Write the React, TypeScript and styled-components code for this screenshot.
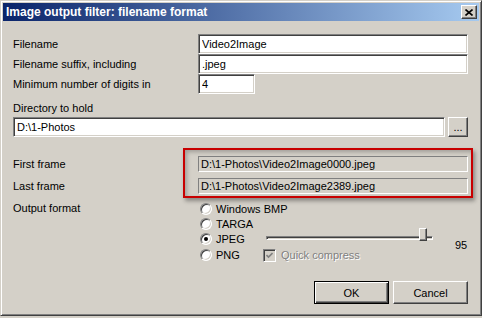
import styled, { createGlobalStyle } from "styled-components";

// classic win2k style dialog for the image output filter

const GlobalStyle = createGlobalStyle`
    html, body {
        margin: 0;
        padding: 0;
        background: #d4d0c8;
    }
    body {
        font-family: "Liberation Sans", Arial, sans-serif;
        font-size: 11px;
        color: #000;
    }
`;

const Window = styled.div`
    width: 482px;
    height: 316px;
    box-sizing: border-box;
    background: #d4d0c8;
    border-style: solid;
    border-width: 1px;
    border-color: #d4d0c8 #404040 #404040 #d4d0c8;
    box-shadow: inset 1px 1px 0 #fff, inset -1px -1px 0 #808080;
    padding: 2px 2px 0;
    display: flex;
    flex-direction: column;
`;

const TitleBar = styled.div`
    height: 18px;
    background: linear-gradient(to right, #0a246a, #a6caf0);
    display: flex;
    align-items: center;
    justify-content: space-between;
    padding: 0 2px 0 3px;
`;

const TitleText = styled.span`
    color: #fff;
    font-weight: 700;
    font-size: 12px;
`;

const CloseButton = styled.div`
    width: 16px;
    height: 14px;
    box-sizing: border-box;
    background: #d4d0c8;
    border-style: solid;
    border-width: 1px;
    border-color: #fff #404040 #404040 #fff;
    box-shadow: inset -1px -1px 0 #808080;
    display: flex;
    align-items: center;
    justify-content: center;
`;

const Content = styled.div`
    flex: 1;
    display: flex;
    flex-direction: column;
    padding: 13px 11px 0 10px;
`;

const FormGrid = styled.div`
    display: grid;
    grid-template-columns: 185px 1fr;
    align-items: center;
`;

const Label = styled.span`
    line-height: 13px;
    white-space: nowrap;
`;

const TextField = styled.input<{ $width?: number }>`
    box-sizing: border-box;
    height: 20px;
    width: ${({ $width }) => ($width ? `${$width}px` : "100%")};
    margin: 0;
    padding: 0 3px;
    font: inherit;
    color: #000;
    background: #fff;
    border-style: solid;
    border-width: 1px;
    border-color: #808080 #fff #fff #808080;
    box-shadow: inset 1px 1px 0 #404040, inset -1px -1px 0 #d4d0c8;
    outline: none;
`;

const DirLabel = styled.div`
    line-height: 13px;
    margin: 8px 0 2px;
`;

const DirRow = styled.div`
    display: flex;
    gap: 3px;
    align-items: flex-start;
`;

const RaisedButton = styled.button<{ $default?: boolean; $w: number; $h: number }>`
    box-sizing: border-box;
    width: ${({ $w }) => $w}px;
    height: ${({ $h }) => $h}px;
    margin: 0;
    padding: 0;
    font: inherit;
    color: #000;
    background: #d4d0c8;
    border-style: solid;
    border-width: 1px;
    border-color: ${({ $default }) => ($default ? "#000" : "#fff #404040 #404040 #fff")};
    box-shadow: ${({ $default }) =>
        $default
            ? "inset 1px 1px 0 #fff, inset -1px -1px 0 #404040, inset -2px -2px 0 #808080"
            : "inset -1px -1px 0 #808080"};
`;

const FramesGrid = styled.div`
    display: grid;
    grid-template-columns: 185px 1fr;
    grid-template-rows: 16px 16px;
    row-gap: 6px;
    align-items: center;
    margin-top: 19px;
`;

const HighlightArea = styled.div`
    grid-column: 2;
    grid-row: 1 / span 2;
    position: relative;
    display: flex;
    flex-direction: column;
    gap: 6px;

    /* red annotation frame drawn over the two read only fields */
    &::after {
        content: "";
        position: absolute;
        top: -8px;
        bottom: -4px;
        left: -15px;
        right: -5px;
        border: 2px solid #c80000;
        box-shadow: 2px 3px 4px rgba(0, 0, 0, 0.35), inset 2px 2px 4px rgba(0, 0, 0, 0.25);
        pointer-events: none;
    }
`;

const StaticField = styled.div`
    box-sizing: border-box;
    height: 16px;
    line-height: 14px;
    padding-left: 2px;
    border-style: solid;
    border-width: 1px;
    border-color: #808080 #fff #fff #808080;
    white-space: nowrap;
`;

const OutputGrid = styled.div`
    display: grid;
    grid-template-columns: 187px 1fr;
    margin-top: 7px;
`;

const OutputLabel = styled.span`
    line-height: 15px;
`;

const FormatGrid = styled.div`
    display: grid;
    grid-template-columns: 63px 177px 1fr;
    grid-template-rows: 15px 15px 16px 16px;
`;

const RadioRow = styled.div<{ $row: number }>`
    grid-column: 1;
    grid-row: ${({ $row }) => $row};
    display: flex;
    align-items: center;
    gap: 4px;
    white-space: nowrap;
`;

const RadioCircle = styled.span<{ $checked?: boolean }>`
    position: relative;
    flex: none;
    box-sizing: border-box;
    width: 12px;
    height: 12px;
    border-radius: 50%;
    background: #fff;
    border-style: solid;
    border-width: 1px;
    border-color: #808080 #fff #fff #808080;
    box-shadow: inset 1px 1px 0 #404040, inset -1px -1px 0 #d4d0c8;

    &::after {
        content: "";
        display: ${({ $checked }) => ($checked ? "block" : "none")};
        position: absolute;
        left: 3px;
        top: 3px;
        width: 4px;
        height: 4px;
        border-radius: 50%;
        background: #000;
    }
`;

const SliderCell = styled.div`
    grid-column: 2;
    grid-row: 3;
    position: relative;
    display: flex;
    align-items: center;
    padding: 0 7px 0 3px;
    margin-top: -3px;
`;

const SliderTrack = styled.div`
    flex: 1;
    height: 4px;
    box-sizing: border-box;
    border-style: solid;
    border-width: 1px;
    border-color: #808080 #fff #fff #808080;
    box-shadow: inset 1px 1px 0 #404040;
`;

const SliderThumb = styled.div`
    position: absolute;
    left: 156px;
    top: 0;
    width: 8px;
    height: 13px;
    box-sizing: border-box;
    background: #d4d0c8;
    border-style: solid;
    border-width: 1px;
    border-color: #fff #404040 #404040 #fff;
    box-shadow: inset -1px -1px 0 #808080;
`;

const SliderValue = styled.span`
    grid-column: 3;
    grid-row: 3 / span 2;
    padding: 8px 0 0 15px;
    line-height: 13px;
`;

const CheckRow = styled.div`
    grid-column: 2;
    grid-row: 4;
    display: flex;
    align-items: center;
    gap: 5px;
`;

const CheckBox = styled.span`
    box-sizing: border-box;
    width: 13px;
    height: 13px;
    background: #d4d0c8;
    border-style: solid;
    border-width: 1px;
    border-color: #808080 #fff #fff #808080;
    box-shadow: inset 1px 1px 0 #404040, inset -1px -1px 0 #d4d0c8;
    display: flex;
    align-items: center;
    justify-content: center;
`;

const DisabledText = styled.span`
    color: #808080;
    text-shadow: 1px 1px 0 #fff;
`;

const ButtonRow = styled.div`
    display: flex;
    justify-content: flex-end;
    gap: 4px;
    margin-top: 18px;
`;

const formats = ["Windows BMP", "TARGA", "JPEG", "PNG"];

export default function App() {
    return (
        <>
            <GlobalStyle />
            <Window>
                <TitleBar>
                    <TitleText>Image output filter: filename format</TitleText>
                    <CloseButton>
                        <svg width="8" height="7" viewBox="0 0 8 7">
                            <path d="M0.5 0.5 L7.5 6.5 M7.5 0.5 L0.5 6.5" stroke="#000" strokeWidth="1.6" />
                        </svg>
                    </CloseButton>
                </TitleBar>

                <Content>
                    <FormGrid>
                        <Label>Filename</Label>
                        <TextField defaultValue="Video2Image" readOnly />
                        <Label>Filename suffix, including</Label>
                        <TextField defaultValue=".jpeg" readOnly />
                        <Label>Minimum number of digits in</Label>
                        <TextField $width={57} defaultValue="4" readOnly />
                    </FormGrid>

                    <DirLabel>Directory to hold</DirLabel>
                    <DirRow>
                        <TextField defaultValue="D:\1-Photos" readOnly />
                        <RaisedButton $w={21} $h={20}>...</RaisedButton>
                    </DirRow>

                    {/* first and last frame preview, marked with the red box */}
                    <FramesGrid>
                        <Label>First frame</Label>
                        <HighlightArea>
                            <StaticField>D:\1-Photos\Video2Image0000.jpeg</StaticField>
                            <StaticField>D:\1-Photos\Video2Image2389.jpeg</StaticField>
                        </HighlightArea>
                        <Label>Last frame</Label>
                    </FramesGrid>

                    <OutputGrid>
                        <OutputLabel>Output format</OutputLabel>
                        <FormatGrid>
                            {formats.map((f, i) => (
                                <RadioRow key={f} $row={i + 1}>
                                    <RadioCircle $checked={f === "JPEG"} />
                                    <span>{f}</span>
                                </RadioRow>
                            ))}
                            <SliderCell>
                                <SliderTrack />
                                <SliderThumb />
                            </SliderCell>
                            <SliderValue>95</SliderValue>
                            <CheckRow>
                                <CheckBox>
                                    <svg width="7" height="7" viewBox="0 0 7 7">
                                        <path d="M0.5 3 L2.5 5 L6.5 1" stroke="#808080" strokeWidth="1.6" fill="none" />
                                    </svg>
                                </CheckBox>
                                <DisabledText>Quick compress</DisabledText>
                            </CheckRow>
                        </FormatGrid>
                    </OutputGrid>

                    <ButtonRow>
                        <RaisedButton $default $w={75} $h={23}>OK</RaisedButton>
                        <RaisedButton $w={75} $h={23}>Cancel</RaisedButton>
                    </ButtonRow>
                </Content>
            </Window>
        </>
    );
}
